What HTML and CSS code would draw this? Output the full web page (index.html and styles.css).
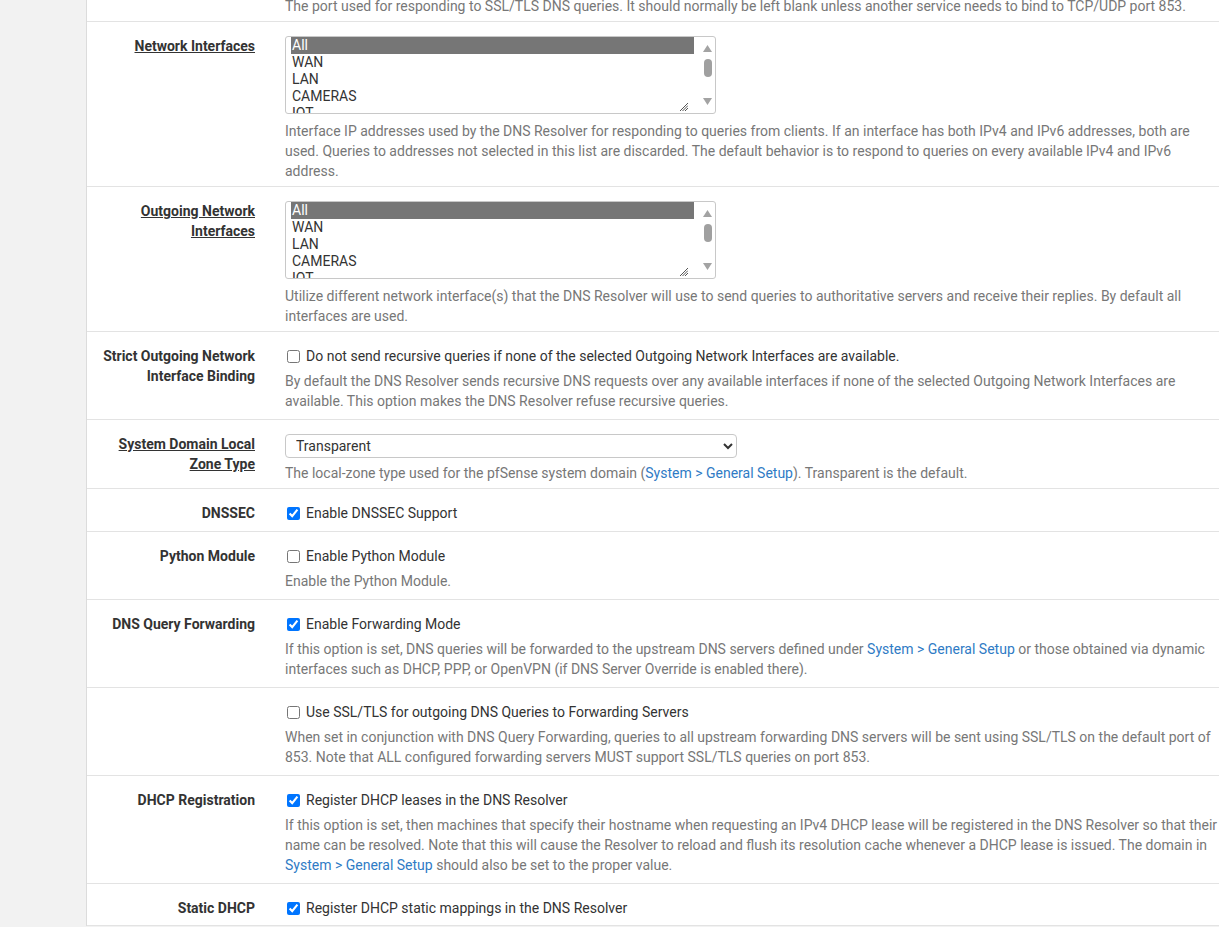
FILE: index.html
```html
<!DOCTYPE html>
<html lang="en">
<head>
  <meta charset="UTF-8" />
  <title>DNS Resolver: General Settings</title>
  <link rel="stylesheet" href="styles.css">
</head>
<body>
  <div class="panel">

    <div class="row first">
      <div class="row-label"></div>
      <div class="row-field">
        <p class="help">The port used for responding to SSL/TLS DNS queries. It should normally be left blank unless another service needs to bind to TCP/UDP port 853.</p>
      </div>
    </div>

    <div class="row tight">
      <div class="row-label"><span class="req">Network Interfaces</span></div>
      <div class="row-field">
        <div class="listbox">
          <div class="listbox-options">
            <div class="opt selected">All</div>
            <div class="opt">WAN</div>
            <div class="opt">LAN</div>
            <div class="opt">CAMERAS</div>
            <div class="opt">IOT</div>
          </div>
          <div class="listbox-scroll">
            <svg class="arrow up" width="9" height="7" viewBox="0 0 9 7"><path d="M4.5 0 L9 7 L0 7 Z" fill="#a3a3a3"/></svg>
            <span class="thumb"></span>
            <svg class="arrow down" width="9" height="7" viewBox="0 0 9 7"><path d="M0 0 L9 0 L4.5 7 Z" fill="#a3a3a3"/></svg>
          </div>
          <svg class="grip" width="8" height="8" viewBox="0 0 8 8"><path d="M0 8 L8 0 M2.5 8 L8 2.5 M5 8 L8 5" stroke="#555" stroke-width="1"/></svg>
        </div>
        <p class="help">Interface IP addresses used by the DNS Resolver for responding to queries from clients. If an interface has both IPv4 and IPv6 addresses, both are used. Queries to addresses not selected in this list are discarded. The default behavior is to respond to queries on every available IPv4 and IPv6 address.</p>
      </div>
    </div>

    <div class="row tight">
      <div class="row-label"><span class="req">Outgoing Network Interfaces</span></div>
      <div class="row-field">
        <div class="listbox">
          <div class="listbox-options">
            <div class="opt selected">All</div>
            <div class="opt">WAN</div>
            <div class="opt">LAN</div>
            <div class="opt">CAMERAS</div>
            <div class="opt">IOT</div>
          </div>
          <div class="listbox-scroll">
            <svg class="arrow up" width="9" height="7" viewBox="0 0 9 7"><path d="M4.5 0 L9 7 L0 7 Z" fill="#a3a3a3"/></svg>
            <span class="thumb"></span>
            <svg class="arrow down" width="9" height="7" viewBox="0 0 9 7"><path d="M0 0 L9 0 L4.5 7 Z" fill="#a3a3a3"/></svg>
          </div>
          <svg class="grip" width="8" height="8" viewBox="0 0 8 8"><path d="M0 8 L8 0 M2.5 8 L8 2.5 M5 8 L8 5" stroke="#555" stroke-width="1"/></svg>
        </div>
        <p class="help">Utilize different network interface(s) that the DNS Resolver will use to send queries to authoritative servers and receive their replies. By default all interfaces are used.</p>
      </div>
    </div>

    <div class="row">
      <div class="row-label">Strict Outgoing Network Interface Binding</div>
      <div class="row-field">
        <label class="check"><input type="checkbox"> Do not send recursive queries if none of the selected Outgoing Network Interfaces are available.</label>
        <p class="help">By default the DNS Resolver sends recursive DNS requests over any available interfaces if none of the selected Outgoing Network Interfaces are available. This option makes the DNS Resolver refuse recursive queries.</p>
      </div>
    </div>

    <div class="row tight">
      <div class="row-label"><span class="req">System Domain Local Zone Type</span></div>
      <div class="row-field">
        <select class="dropdown">
          <option>Transparent</option>
          <option>Deny</option>
          <option>Refuse</option>
          <option>Static</option>
          <option>Redirect</option>
          <option>Inform</option>
        </select>
        <p class="help">The local-zone type used for the pfSense system domain (<a href="#">System &gt; General Setup</a>). Transparent is the default.</p>
      </div>
    </div>

    <div class="row">
      <div class="row-label">DNSSEC</div>
      <div class="row-field">
        <label class="check"><input type="checkbox" checked> Enable DNSSEC Support</label>
      </div>
    </div>

    <div class="row">
      <div class="row-label">Python Module</div>
      <div class="row-field">
        <label class="check"><input type="checkbox"> Enable Python Module</label>
        <p class="help">Enable the Python Module.</p>
      </div>
    </div>

    <div class="row">
      <div class="row-label">DNS Query Forwarding</div>
      <div class="row-field">
        <label class="check"><input type="checkbox" checked> Enable Forwarding Mode</label>
        <p class="help">If this option is set, DNS queries will be forwarded to the upstream DNS servers defined under <a href="#">System &gt; General Setup</a> or those obtained via dynamic interfaces such as DHCP, PPP, or OpenVPN (if DNS Server Override is enabled there).</p>
      </div>
    </div>

    <div class="row">
      <div class="row-label"></div>
      <div class="row-field">
        <label class="check"><input type="checkbox"> Use SSL/TLS for outgoing DNS Queries to Forwarding Servers</label>
        <p class="help">When set in conjunction with DNS Query Forwarding, queries to all upstream forwarding DNS servers will be sent using SSL/TLS on the default port of 853. Note that ALL configured forwarding servers MUST support SSL/TLS queries on port 853.</p>
      </div>
    </div>

    <div class="row">
      <div class="row-label">DHCP Registration</div>
      <div class="row-field">
        <label class="check"><input type="checkbox" checked> Register DHCP leases in the DNS Resolver</label>
        <p class="help">If this option is set, then machines that specify their hostname when requesting an IPv4 DHCP lease will be registered in the DNS Resolver so that their name can be resolved. Note that this will cause the Resolver to reload and flush its resolution cache whenever a DHCP lease is issued. The domain in <a href="#">System &gt; General Setup</a> should also be set to the proper value.</p>
      </div>
    </div>

    <div class="row last">
      <div class="row-label">Static DHCP</div>
      <div class="row-field">
        <label class="check"><input type="checkbox" checked> Register DHCP static mappings in the DNS Resolver</label>
      </div>
    </div>

  </div>
</body>
</html>
```

FILE: styles.css
```css
html, body {
  overflow: hidden;
}

body {
  margin: 0;
  background: #f2f2f2;
  font-family: Roboto, "Liberation Sans", sans-serif;
  font-size: 14px;
  color: #333;
}

.panel {
  margin-left: 86px;
  width: 1136px;
  background: white;
  border-left: 1px solid #dcdcdc;
}

.row {
  display: flex;
  padding: 14px 0 8px;
  border-bottom: 1px solid #e3e3e3;
}

.row.tight {
  padding-bottom: 5px;
}

.row.first {
  padding: 0 0 5px;
}

.row.first .help {
  margin-top: -4px;
}

.row.last {
  padding-bottom: 7px;
}

.row-label {
  width: 183px;
  flex-shrink: 0;
  box-sizing: border-box;
  padding: 0 15px 0 8px;
  text-align: right;
  font-weight: bold;
  line-height: 20px;
  color: #333;
}

.req {
  text-decoration: underline;
}

.row-field {
  flex: 1;
  padding-left: 15px;
}

.check {
  display: flex;
  align-items: center;
  height: 20px;
  line-height: 20px;
  color: #333;
}

.check input {
  width: 13px;
  height: 13px;
  margin: 0 6px 0 2px;
}

.help {
  margin: 5px 0 0;
  line-height: 20px;
  color: #777;
}

.help a {
  color: #2f7bc5;
  text-decoration: none;
}

/* multi select list */
.listbox {
  position: relative;
  display: flex;
  width: 429px;
  height: 76px;
  border: 1px solid #c8c8c8;
  border-radius: 3px;
  overflow: hidden;
  margin-bottom: 7px;
}

.listbox-options {
  width: 408px;
  box-sizing: border-box;
  padding: 0 0 0 5px;
  overflow: hidden;
}

.opt {
  height: 17px;
  line-height: 17px;
  padding-left: 1px;
  color: #333;
  white-space: nowrap;
}

.opt.selected {
  background: #767676;
  color: white;
}

.listbox-scroll {
  width: 21px;
  box-sizing: border-box;
  padding: 8px 2px 0 8px;
  display: flex;
  flex-direction: column;
  align-items: center;
}

.thumb {
  display: block;
  width: 8px;
  height: 18px;
  margin-top: 7px;
  border-radius: 4px;
  background: #a0a0a0;
}

.arrow.down {
  margin-top: 21px;
}

.grip {
  position: absolute;
  right: 27px;
  bottom: 2px;
}

/* single select */
.dropdown {
  display: block;
  width: 452px;
  height: 24px;
  padding: 0 6px;
  border: 1px solid #c8c8c8;
  border-radius: 4px;
  background: white;
  font-family: Roboto, "Liberation Sans", sans-serif;
  font-size: 14px;
  color: #333;
}
```
